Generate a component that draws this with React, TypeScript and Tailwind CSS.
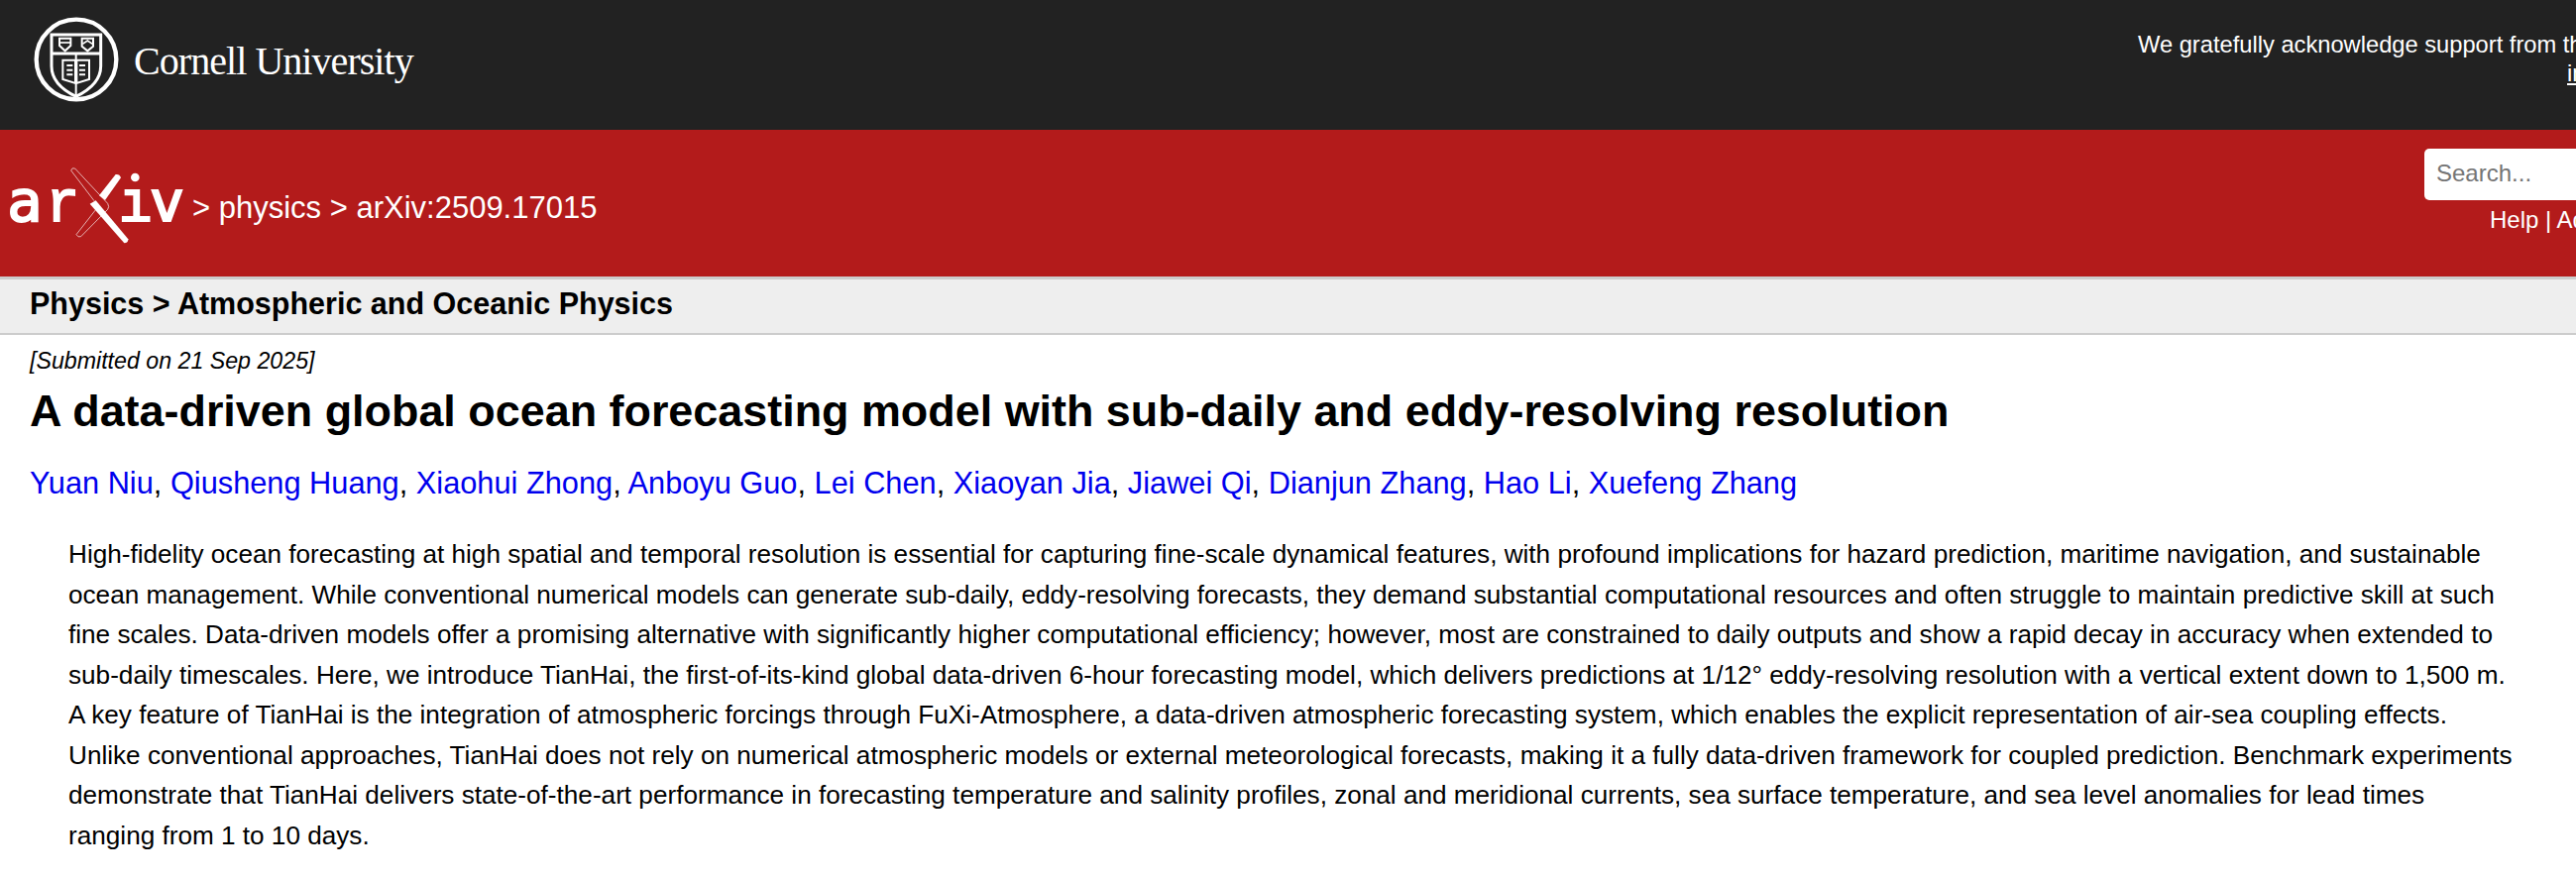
function CornellSeal() {
  return (
    <svg viewBox="0 0 330 300" className="w-[110px] h-[100px] shrink-0" fill="none" stroke="white">
      <circle cx="171" cy="150" r="121" strokeWidth="13" />
      <path d="M96 75H245V170C245 215 205 245 170 262C135 245 96 215 96 170Z" strokeWidth="9" />
      <path d="M96 132H245" strokeWidth="9" />
      <path d="M170 132V262" strokeWidth="6" />
      <path d="M120 86H154V108L137 124L120 108Z" strokeWidth="6" />
      <path d="M120 99H154" strokeWidth="5" />
      <path d="M188 86H222V110L205 124L188 110Z" strokeWidth="6" />
      <path d="M190 103L205 93L220 103" strokeWidth="5" />
      <path d="M130 152H168V222L130 210ZM210 152H172V222L210 210Z" strokeWidth="6" />
      <path d="M142 168H160M142 182H160M142 196H160M180 168H198M180 182H198M180 196H198" strokeWidth="6" />
    </svg>
  )
}

function ArxivLogo() {
  const dejavu = "'DejaVu Sans Mono', monospace"
  const liberation = "'Liberation Mono', monospace"
  return (
    <svg viewBox="0 0 600 270" className="w-[200px] h-[90px] shrink-0" fill="white" stroke="white" strokeWidth="6">
      <text x="22" y="188" fontFamily={dejavu} fontSize="170" textLength="106" lengthAdjust="spacingAndGlyphs">a</text>
      <text x="140" y="188" fontFamily={liberation} fontSize="175" textLength="100" lengthAdjust="spacingAndGlyphs">r</text>
      <text x="360" y="188" fontFamily={liberation} fontSize="175" textLength="100" lengthAdjust="spacingAndGlyphs">ı</text>
      <text x="452" y="188" fontFamily={dejavu} fontSize="170" textLength="106" lengthAdjust="spacingAndGlyphs">v</text>
      <circle cx="409" cy="57" r="10" />
      <g stroke="none">
        <path d="M272 137L290 127L388 244Q388 256 376 256Z" />
        <path d="M300 112L350 48Q362 46 366 58L318 126Z" />
      </g>
      <path
        d="M215 36Q218 26 227 30L326 136Q332 146 326 154L245 236Q236 240 231 230L292 152M215 36L285 128"
        fill="none"
        strokeWidth="2"
      />
    </svg>
  )
}

export default function App() {
  const authors = [
    'Yuan Niu',
    'Qiusheng Huang',
    'Xiaohui Zhong',
    'Anboyu Guo',
    'Lei Chen',
    'Xiaoyan Jia',
    'Jiawei Qi',
    'Dianjun Zhang',
    'Hao Li',
    'Xuefeng Zhang',
  ]

  return (
    <div className="w-[2599px] h-[889px] overflow-hidden bg-white text-black font-['Liberation_Sans',Arial,sans-serif]">
      <div className="w-[3100px]">
        {/* Cornell bar */}
        <div className="h-[131px] bg-[#222222] flex items-start justify-between pl-5 pt-[10px]">
          <div className="flex items-center gap-[5px]">
            <CornellSeal />
            <span className="font-['Liberation_Serif',serif] text-[40px] text-white tracking-[-0.95px] -mt-[1px] pt-[4px]">
              Cornell University
            </span>
          </div>
          <div className="w-[943px] pt-[21px] text-[23.7px] leading-[29px] text-white whitespace-nowrap">
            <div>
              We gratefully acknowledge support from the Simons Foundation, <span className="underline">member</span>
            </div>
            <div className="pl-[433px]">
              <span className="underline">institutions</span>, and all contributors.
            </div>
          </div>
        </div>

        {/* arXiv bar */}
        <div className="h-[148px] bg-[#b31b1b] flex items-center justify-between">
          <div className="flex items-center text-white text-[31px]">
            <ArxivLogo />
            <span className="-ml-[6px] mt-[11px]">&gt; physics &gt; arXiv:2509.17015</span>
          </div>
          <div className="w-[654px] self-start pt-[19px] flex flex-col items-start">
            <div className="w-[300px] h-[52px] bg-white rounded-[5px] flex items-center pl-3 pb-[2px] text-[24px] text-[#757575]">
              Search...
            </div>
            <div className="ml-[66px] mt-[2px] text-[24px] leading-[36px] text-white">Help | Advanced Search</div>
          </div>
        </div>

        {/* Subject bar */}
        <div className="h-[59px] bg-[#eeeeee] border-t-[3px] border-b-2 border-[#cccccc] flex items-center pl-[30px] pb-[5px] text-[30.5px] font-bold">
          Physics &gt; Atmospheric and Oceanic Physics
        </div>
      </div>

      {/* Paper */}
      <div className="w-[2599px] pl-[30px] pr-[60px] pt-[8px]">
        <div className="text-[23.2px] leading-[36px] italic">[Submitted on 21 Sep 2025]</div>
        <h1 className="mt-[6px] text-[44.9px] leading-[54px] font-bold">
          A data-driven global ocean forecasting model with sub-daily and eddy-resolving resolution
        </h1>
        <div className="mt-[24px] text-[30.75px] leading-[44px]">
          {authors.map((name, i) => (
            <span key={name}>
              {i > 0 && ', '}
              <span className="text-[#0000ee]">{name}</span>
            </span>
          ))}
        </div>
        <p className="mt-[29px] ml-[39px] text-[26.15px] leading-[40.5px]">
          High-fidelity ocean forecasting at high spatial and temporal resolution is essential for capturing fine-scale
          dynamical features, with profound implications for hazard prediction, maritime navigation, and sustainable
          ocean management. While conventional numerical models can generate sub-daily, eddy-resolving forecasts, they
          demand substantial computational resources and often struggle to maintain predictive skill at such fine
          scales. Data-driven models offer a promising alternative with significantly higher computational efficiency;
          however, most are constrained to daily outputs and show a rapid decay in accuracy when extended to sub-daily
          timescales. Here, we introduce TianHai, the first-of-its-kind global data-driven 6-hour forecasting model,
          which delivers predictions at 1/12° eddy-resolving resolution with a vertical extent down to 1,500 m. A key
          feature of TianHai is the integration of atmospheric forcings through FuXi-Atmosphere, a data-driven
          atmospheric forecasting system, which enables the explicit representation of air-sea coupling effects. Unlike
          conventional approaches, TianHai does not rely on numerical atmospheric models or external meteorological
          forecasts, making it a fully data-driven framework for coupled prediction. Benchmark experiments demonstrate
          that TianHai delivers state-of-the-art performance in forecasting temperature and salinity profiles, zonal and
          meridional currents, sea surface temperature, and sea level anomalies for lead times ranging from 1 to 10 days.
        </p>
      </div>
    </div>
  )
}
